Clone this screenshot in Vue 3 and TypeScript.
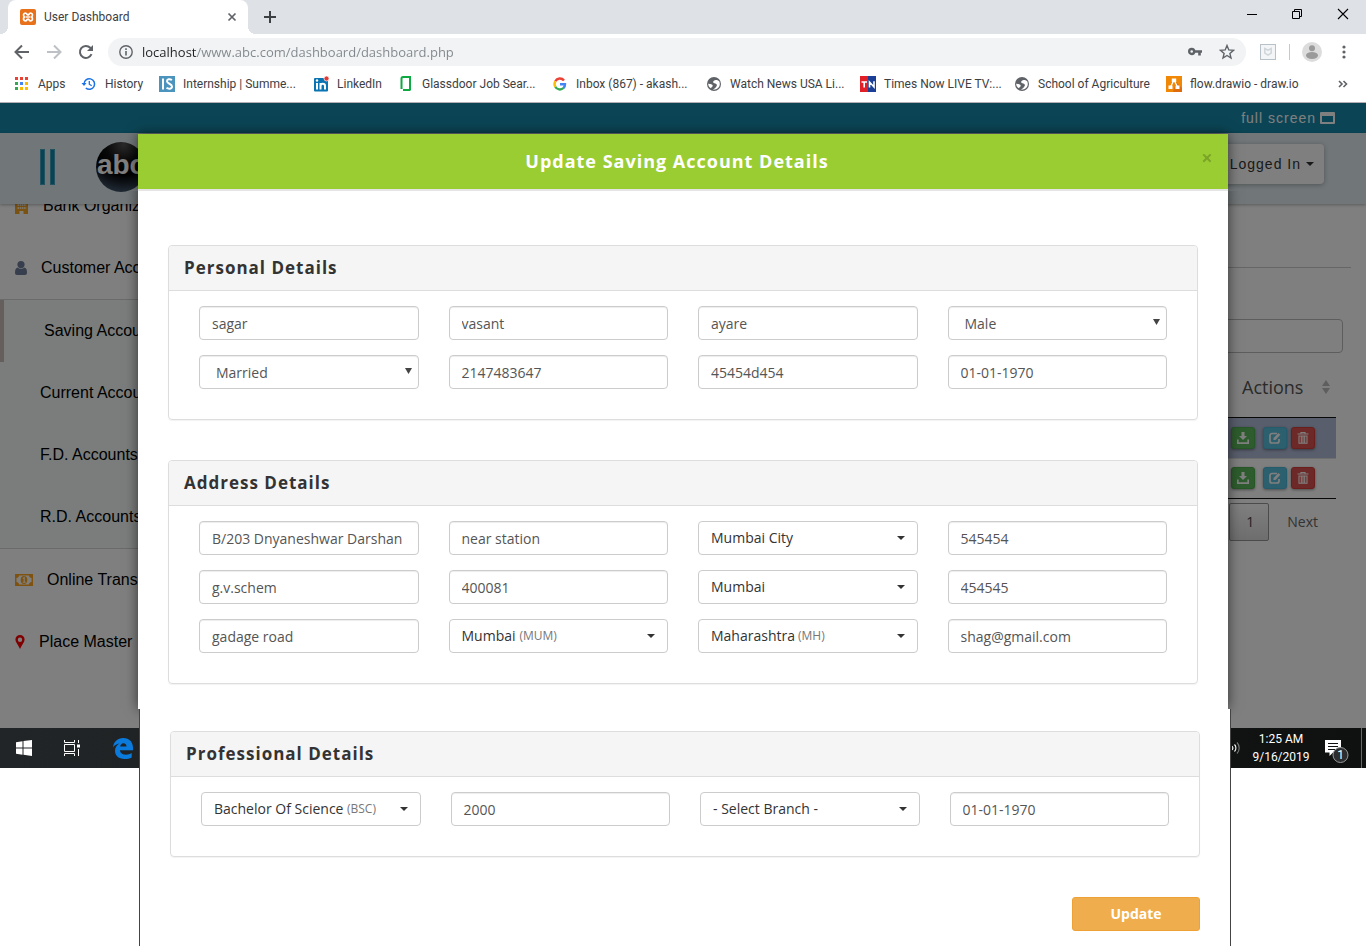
<script setup lang="ts">
import { ref } from 'vue'

type FieldKind = 'text' | 'native' | 'picker'
interface Field { label: string; kind: FieldKind; value: string; sub?: string }
interface Panel { title: string; fields: Field[] }
interface Bookmark { label: string; icon: string }

const url = ref('localhost/www.abc.com/dashboard/dashboard.php')

const bookmarks: Bookmark[] = [
  { label: 'Apps', icon: 'apps' },
  { label: 'History', icon: 'history' },
  { label: 'Internship | Summe...', icon: 'internshala' },
  { label: 'LinkedIn', icon: 'linkedin' },
  { label: 'Glassdoor Job Sear...', icon: 'glassdoor' },
  { label: 'Inbox (867) - akash...', icon: 'google' },
  { label: 'Watch News USA Li...', icon: 'globe' },
  { label: 'Times Now LIVE TV:...', icon: 'timesnow' },
  { label: 'School of Agriculture', icon: 'globe' },
  { label: 'flow.drawio - draw.io', icon: 'drawio' }
]

const appColors = ['#ea4335', '#ea4335', '#ea4335', '#34a853', '#4285f4', '#fbbc04', '#34a853', '#fbbc04', '#fbbc04']

const accountLinks = ['Saving Accounts', 'Current Accounts', 'F.D. Accounts', 'R.D. Accounts']

const upperPanels = ref<Panel[]>([
  {
    title: 'Personal Details',
    fields: [
      { label: 'First name', kind: 'text', value: 'sagar' },
      { label: 'Middle name', kind: 'text', value: 'vasant' },
      { label: 'Last name', kind: 'text', value: 'ayare' },
      { label: 'Gender', kind: 'native', value: 'Male' },
      { label: 'Marital status', kind: 'native', value: 'Married' },
      { label: 'Aadhaar number', kind: 'text', value: '2147483647' },
      { label: 'PAN number', kind: 'text', value: '45454d454' },
      { label: 'Date of birth', kind: 'text', value: '01-01-1970' }
    ]
  },
  {
    title: 'Address Details',
    fields: [
      { label: 'Flat', kind: 'text', value: 'B/203 Dnyaneshwar Darshan' },
      { label: 'Landmark', kind: 'text', value: 'near station' },
      { label: 'District', kind: 'picker', value: 'Mumbai City' },
      { label: 'Phone', kind: 'text', value: '545454' },
      { label: 'Street', kind: 'text', value: 'g.v.schem' },
      { label: 'Pin code', kind: 'text', value: '400081' },
      { label: 'Taluka', kind: 'picker', value: 'Mumbai' },
      { label: 'Mobile', kind: 'text', value: '454545' },
      { label: 'Road', kind: 'text', value: 'gadage road' },
      { label: 'City', kind: 'picker', value: 'Mumbai', sub: '(MUM)' },
      { label: 'State', kind: 'picker', value: 'Maharashtra', sub: '(MH)' },
      { label: 'Email', kind: 'text', value: 'shag@gmail.com' }
    ]
  }
])

const lowerPanels = ref<Panel[]>([
  {
    title: 'Professional Details',
    fields: [
      { label: 'Qualification', kind: 'picker', value: 'Bachelor Of Science', sub: '(BSC)' },
      { label: 'Income', kind: 'text', value: '2000' },
      { label: 'Branch', kind: 'picker', value: '- Select Branch -' },
      { label: 'Opening date', kind: 'text', value: '01-01-1970' }
    ]
  }
])

const sheets = [
  { name: 'upper', panels: upperPanels },
  { name: 'lower', panels: lowerPanels }
]
</script>

<template>
  <div class="screen">
    <header class="browser">
      <div class="tabstrip">
        <div class="tab">
          <svg class="i16" viewBox="0 0 16 16"><rect width="16" height="16" rx="2" fill="#e8711c" /><path d="M5.300 4a2.200 2.200 0 0 0-.8 4 2.200 2.200 0 0 0 .8 4C7 12 7 10 8 10s1 2 2.700 2a2.200 2.200 0 0 0 .8-4 2.200 2.200 0 0 0-.8-4C9 4 9 6 8 6S7 4 5.300 4z" fill="none" stroke="#fff" stroke-width="1.700" /><path d="M6 8h4" stroke="#fff" stroke-width="1.400" /></svg>
          <span class="tab-title">User Dashboard</span>
          <button class="bare" aria-label="Close tab"><svg width="10" height="10" viewBox="0 0 10 10"><path d="M1.500 1.500l7 7m0-7l-7 7" stroke="#5f6368" stroke-width="1.700" /></svg></button>
        </div>
        <button class="bare new-tab" aria-label="New tab"><svg width="12" height="12" viewBox="0 0 12 12"><path d="M6 0v12M0 6h12" stroke="#3c4043" stroke-width="2" /></svg></button>
        <div class="window-controls">
          <button class="bare" aria-label="Minimize"><svg width="10" height="12" viewBox="0 0 10 12"><path d="M0 6.500h10" stroke="#000" /></svg></button>
          <button class="bare" aria-label="Restore"><svg width="10" height="12" viewBox="0 0 10 12"><path d="M.5 3.500h7v7h-7zM2.500 3V1.500h7v7H8" fill="none" stroke="#000" /></svg></button>
          <button class="bare" aria-label="Close window"><svg width="12" height="12" viewBox="0 0 12 12"><path d="M1 1l10 10M11 1L1 11" stroke="#000" stroke-width="1.100" /></svg></button>
        </div>
      </div>

      <div class="toolbar">
        <button class="bare" aria-label="Back"><svg class="i16" viewBox="0 0 16 16"><path d="M15 8H2M8 1.500L1.500 8 8 14.500" fill="none" stroke="#5f6368" stroke-width="2" /></svg></button>
        <button class="bare" aria-label="Forward"><svg class="i16" viewBox="0 0 16 16"><path d="M1 8h13M8 1.500L14.500 8 8 14.500" fill="none" stroke="#bdc1c6" stroke-width="2" /></svg></button>
        <button class="bare" aria-label="Reload"><svg class="i16" viewBox="0 0 16 16"><path d="M13.500 10.200A6 6 0 1 1 12.300 3.800L14 5.500" fill="none" stroke="#5f6368" stroke-width="2" /><path d="M15 1v6H9z" fill="#5f6368" /></svg></button>
        <div class="omnibox">
          <svg class="i14" viewBox="0 0 14 14"><circle cx="7" cy="7" r="6.200" fill="none" stroke="#5f6368" stroke-width="1.400" /><path d="M7 6v4.500M7 3.300v1.600" stroke="#5f6368" stroke-width="1.600" /></svg>
          <input v-model="url" class="url" aria-label="Address" />
          <svg class="i14" viewBox="0 0 14 14"><circle cx="3.700" cy="6.500" r="2.500" fill="none" stroke="#5f6368" stroke-width="2.400" /><path d="M6 6.500h8M11.500 7v3.500" stroke="#5f6368" stroke-width="2.600" /></svg>
          <svg class="i16 star" viewBox="0 0 16 16"><path d="M8 1.500l1.800 4.400 4.700.4-3.600 3.100 1.100 4.600-4-2.500L4 14l1.100-4.600-3.600-3.100 4.700-.4z" fill="none" stroke="#5f6368" stroke-width="1.400" /></svg>
        </div>
        <svg class="i16 ext" viewBox="0 0 16 16"><rect x=".5" y=".5" width="15" height="15" fill="#f3f5f6" stroke="#b9c1c8" /><path d="M4.800 4.500v4.700L8 11.200l3.200-2V4.500L8 6.200z" fill="none" stroke="#cfd5da" stroke-width="1.500" /></svg>
        <span class="sep"></span>
        <svg class="avatar" viewBox="0 0 20 20"><circle cx="10" cy="10" r="10" fill="#dcdcdc" /><circle cx="10" cy="6.200" r="3" fill="#9a9a9a" /><ellipse cx="10" cy="13.500" rx="6" ry="3.400" fill="#9a9a9a" /></svg>
        <button class="bare dots" aria-label="Menu"><svg width="4" height="14" viewBox="0 0 4 14"><g fill="#5f6368"><circle cx="2" cy="2" r="1.600" /><circle cx="2" cy="7" r="1.600" /><circle cx="2" cy="12" r="1.600" /></g></svg></button>
      </div>

      <nav class="bookmarks" aria-label="Bookmarks">
        <a v-for="b in bookmarks" :key="b.label" href="#">
          <svg class="i16" viewBox="0 0 16 16">
            <template v-if="b.icon === 'apps'">
              <rect v-for="(c, i) in appColors" :key="i" :x="1 + (i % 3) * 5" :y="1 + Math.floor(i / 3) * 5" width="3" height="3" :fill="c" />
            </template>
            <template v-else-if="b.icon === 'history'">
              <path d="M3 8a5.300 5.300 0 1 1 1.800 4" fill="none" stroke="#1a73e8" stroke-width="1.500" /><path d="M.5 7h5L3 10z" fill="#1a73e8" /><path d="M8.300 5v3.200l2.400 1.500" fill="none" stroke="#1a73e8" stroke-width="1.300" />
            </template>
            <template v-else-if="b.icon === 'internshala'">
              <rect width="16" height="16" fill="#4a94be" /><path d="M4 2.500v11M13 4c-2.500-1.500-5-.8-5 1.200C8 8 13 7.500 13 10.500c0 2.500-3.500 2.800-5.500 1.300" fill="none" stroke="#fff" stroke-width="2" />
            </template>
            <template v-else-if="b.icon === 'linkedin'">
              <rect x="1" y="2" width="14" height="13.500" rx="1" fill="#0a73b1" /><path d="M4 7v6.500M7.500 7v6.500M7.500 10c0-3 4.500-3 4.500 0v3.500" fill="none" stroke="#fff" stroke-width="2" /><circle cx="4" cy="4.500" r="1.200" fill="#fff" /><circle cx="13.500" cy="2.500" r="2.500" fill="#e53935" stroke="#fff" stroke-width=".7" />
            </template>
            <template v-else-if="b.icon === 'glassdoor'">
              <path d="M3.500 13V2.500a1.500 1.500 0 0 1 1.500-1.500h8" fill="none" stroke="#0caa41" stroke-width="2" /><path d="M12 1v13.500M12 14H5" fill="none" stroke="#0caa41" stroke-width="2" />
            </template>
            <template v-else-if="b.icon === 'google'">
              <g fill="none" stroke-width="2.400"><path d="M3.300 5.300A5.200 5.200 0 0 1 12 4.500" stroke="#ea4335" /><path d="M3.300 10.700a5.200 5.200 0 0 1 0-5.400" stroke="#fbbc05" /><path d="M11.500 12a5.200 5.200 0 0 1-8.200-1.300" stroke="#34a853" /><path d="M8 8.200h5a5 5 0 0 1-1.600 3.900" stroke="#4285f4" /></g>
            </template>
            <template v-else-if="b.icon === 'globe'">
              <circle cx="8" cy="8" r="7" fill="#5f6368" /><path d="M13.200 5.200C12 4.500 11 3.500 9 4.200 6.500 5 6.800 6.800 8.500 7.200c2.300.5 3 1.500 2 3-.9 1.300-1.500 2.200-3.500 3.500 4 .2 6.800-2.300 6.800-5.700 0-1.100-.2-2-.6-2.800zM2.200 7.800C4 8 6.700 8.300 6.700 9.800c0 1.200-1.400 1-1.700 2.500-1.700-.9-2.800-2.500-2.800-4.500z" fill="#fff" />
            </template>
            <template v-else-if="b.icon === 'timesnow'">
              <rect width="8" height="16" fill="#e01f26" /><rect x="8" width="8" height="16" fill="#1b3f94" /><path d="M1.500 6h5.500M4.200 6v5.500M9.500 11.500V6l4.500 5V5.300" fill="none" stroke="#fff" stroke-width="1.600" />
            </template>
            <template v-else>
              <rect width="16" height="16" fill="#f08705" /><path d="M10 6l6 6v4H7z" fill="#df6c0c" /><path d="M8 4L4.500 11M8 4l3.500 7" stroke="#fff" stroke-width="1.300" /><path d="M5.800 2.500h4.400V6H5.800zM2.500 9.500h4V13h-4zM9.500 9.500h4V13h-4z" fill="#fff" />
            </template>
          </svg>
          <span>{{ b.label }}</span>
        </a>
        <button class="bare more" aria-label="More bookmarks"><svg width="10" height="8" viewBox="0 0 10 8"><path d="M1 1l3 3-3 3M5.500 1l3 3-3 3" fill="none" stroke="#5f6368" stroke-width="1.600" /></svg></button>
      </nav>
    </header>

    <div class="page">
      <div class="topbar">
        <a href="#">full screen</a>
        <svg width="15" height="12" viewBox="0 0 15 12"><path d="M0 1a1 1 0 0 1 1-1h13a1 1 0 0 1 1 1v10a1 1 0 0 1-1 1H1a1 1 0 0 1-1-1zM2 4v6h11V4z" fill="#fff" fill-rule="evenodd" /></svg>
      </div>
      <div class="appbar">
        <button class="bare menu-toggle" aria-label="Toggle menu"><i></i><i></i></button>
        <svg class="logo" viewBox="0 0 50 50" role="img" aria-label="abc">
          <defs><radialGradient id="ball" cx=".55" cy=".05" r="1"><stop offset="0" stop-color="#555" /><stop offset=".35" stop-color="#111" /><stop offset=".6" stop-color="#000" /><stop offset="1" stop-color="#4a6078" /></radialGradient></defs>
          <circle cx="25" cy="25" r="25" fill="url(#ball)" />
          <text x="25" y="32" text-anchor="middle" class="logo-text">abc</text>
        </svg>
        <button class="login">Logged In <svg width="8" height="4" viewBox="0 0 8 4"><path d="M0 0h8L4 4z" fill="#333" /></svg></button>
      </div>
      <div class="workspace">
        <nav class="sidebar" aria-label="Main menu">
          <a href="#"><svg width="14" height="16" viewBox="0 0 14 16"><path d="M0 0h13v16H8.500v-3h-4v3H0z" fill="#f5a623" /><path d="M2.500 4h9M2.500 7h9M2.500 10h9" stroke="#fff" stroke-width="1.300" stroke-dasharray="1.500 .7" /></svg>Bank Organization</a>
          <a href="#"><svg width="12" height="14" viewBox="0 0 12 14"><circle cx="6" cy="3.600" r="3.600" fill="#6f7f9c" /><path d="M2.500 6.500c2 1.800 5 1.800 7 0C11.500 7 12 9 12 12c0 1.300-.8 2-2 2H2c-1.200 0-2-.7-2-2 0-3 .5-5 2.500-5.500z" fill="#6f7f9c" /></svg>Customer Accounts</a>
          <div class="submenu">
            <a v-for="(l, i) in accountLinks" :key="l" href="#" :class="{ active: i === 0 }">{{ l }}</a>
          </div>
          <a href="#"><svg width="18" height="12" viewBox="0 0 18 12"><path d="M0 0h18v12H0zM4 1.500C4 3 3 4 1.500 4v4C3 8 4 9 4 10.500h10C14 9 15 8 16.500 8V4C15 4 14 3 14 1.500z" fill="#ffa51e" fill-rule="evenodd" /><ellipse cx="9" cy="6" rx="3.300" ry="4" fill="#ffa51e" /><path d="M8 4.500l1.200-.9v4.200M7.700 8.200h3" fill="none" stroke="#fff" stroke-width="1.100" /></svg>Online Transactions</a>
          <a href="#"><svg width="10" height="14" viewBox="0 0 10 14"><path d="M5 0a4.600 4.600 0 0 1 4.600 4.600C9.600 7 7 10 5 14 3 10 .4 7 .4 4.600A4.600 4.600 0 0 1 5 0zm0 2.500a2.200 2.200 0 1 0 0 4.400 2.200 2.200 0 0 0 0-4.400z" fill="#f00" fill-rule="evenodd" /></svg>Place Master</a>
        </nav>
        <main class="main">
          <hr />
          <input class="search" aria-label="Search" />
          <table>
            <thead>
              <tr><td></td><th scope="col">Actions<svg width="10" height="14" viewBox="0 0 10 14"><path d="M1 6l4-6 4 6zM1 8l4 6 4-6z" fill="#bcbcbc" /></svg></th></tr>
            </thead>
            <tbody>
              <tr v-for="n in 2" :key="n">
                <td></td>
                <td class="actions"><div>
                  <button class="act save" aria-label="Download"><svg viewBox="0 0 12 12"><path d="M4.500 0h3v4H10L6 8 2 4h2.500z" fill="#fff" /><path d="M.8 7.500v3.700h10.400V7.500" fill="none" stroke="#fff" stroke-width="1.700" /></svg></button>
                  <button class="act edit" aria-label="Edit"><svg viewBox="0 0 12 12"><path d="M8 1.500H3A2 2 0 0 0 1 3.500V9a2 2 0 0 0 2 2h5a2 2 0 0 0 2-2V7" fill="none" stroke="#fff" stroke-width="1.700" /><path d="M4.500 8V6l5-5 1.800 1.800L6.500 8z" fill="#fff" /></svg></button>
                  <button class="act del" aria-label="Delete"><svg viewBox="0 0 12 12"><path d="M4 1.500V.5h4v1M0.500 2h11" fill="none" stroke="#fff" stroke-width="1.200" /><path d="M2 4v7.300h8V4zM4.300 4v7M6 4v7M7.700 4v7" fill="none" stroke="#fff" stroke-width="1.100" /></svg></button>
                </div></td>
              </tr>
            </tbody>
          </table>
          <div class="pager"><button class="current">1</button><button class="next">Next</button></div>
        </main>
      </div>
      <div class="backdrop"></div>
    </div>

    <footer class="taskbar">
      <button class="bare" aria-label="Start"><svg width="16" height="16" viewBox="0 0 16 16"><path d="M0 2.200L6.500 1.300v6.200H0zM7.500 1.100L16 0v7.500H7.500zM0 8.500h6.500v6.200L0 13.800zM7.500 8.500H16V16l-8.500-1.200z" fill="#fff" /></svg></button>
      <button class="bare" aria-label="Task view"><svg width="16" height="16" viewBox="0 0 16 16"><path d="M.5 4.500h10v7H.5zM.5 0v2.500h10V0M.5 16v-2.500h10V16M14.500 0v3M14.500 9v7" fill="none" stroke="#fff" /><rect x="13" y="4.500" width="3" height="3" fill="#fff" /></svg></button>
      <button class="bare edge" aria-label="Edge"><svg width="22" height="21" viewBox="-1 0 22 21"><path d="M0 9.300C.6 4 4.500 0 10.300 0 16.500 0 20 4.300 20 9.800v2.500H7c.2 3 2.700 4.400 5.800 4.400 2.200 0 4.200-.6 5.900-1.600v4.300c-2 1.100-4.500 1.600-7.200 1.600C5.800 21 2 17.800 2 12.800 2 9.500 3.800 6.800 6.500 5.400 4 5.700 1.500 7 0 9.300zM7.200 8.500h6.300c0-2-1-3.300-3-3.300-1.900 0-3 1.400-3.300 3.300z" fill="#0a7bdc" /></svg></button>
      <svg class="volume" width="10" height="14" viewBox="0 0 10 14"><path d="M0 5a3 3 0 0 1 0 4M2.500 3.500a5 5 0 0 1 0 7" fill="none" stroke="#fff" stroke-width="1.100" /><path d="M5 1.500a8 8 0 0 1 0 11" fill="none" stroke="#777" stroke-width="1.100" /></svg>
      <div class="clock"><span>1:25 AM</span><span>9/16/2019</span></div>
      <svg class="note" width="24" height="30" viewBox="0 -5 24 30"><path d="M0 2h16v12.500H8L4.500 18v-3.500H0z" fill="#fff" /><path d="M3 5.500h10M3 8.500h10M3 11.500h7" stroke="#111" /><circle cx="15.500" cy="17" r="7.500" fill="#2b2d2e" stroke="#999" /><text x="15.500" y="21" text-anchor="middle" class="badge">1</text></svg>
      <span class="peek"></span>
    </footer>

    <section class="modal" role="dialog" aria-labelledby="dialog-title">
      <header class="modal-head">
        <h4 id="dialog-title">Update Saving Account Details</h4>
        <button class="close" aria-label="Close">×</button>
      </header>
      <form @submit.prevent>
        <div v-for="s in sheets" :key="s.name" class="sheet" :class="s.name">
          <fieldset v-for="p in s.panels.value" :key="p.title" class="panel" :aria-label="p.title">
            <h5>{{ p.title }}</h5>
            <div class="fields">
              <template v-for="f in p.fields" :key="f.label">
                <input v-if="f.kind === 'text'" v-model="f.value" class="control" :aria-label="f.label" />
                <label v-else class="control choice" :class="f.kind">
                  <select :aria-label="f.label"><option>{{ f.value }}</option></select>
                  <small v-if="f.sub">{{ f.sub }}</small>
                  <svg v-if="f.kind === 'picker'" width="8" height="4" viewBox="0 0 8 4"><path d="M0 0h8L4 4z" fill="#333" /></svg>
                  <svg v-else class="tri" width="7" height="6" viewBox="0 0 7 6"><path d="M0 0h7L3.500 6z" fill="#444" /></svg>
                </label>
              </template>
            </div>
          </fieldset>
          <button v-if="s.name === 'lower'" type="submit" class="update">Update</button>
        </div>
      </form>
    </section>
  </div>
</template>

<style>
body {
  margin: 0;
  background: #fff;
}
</style>

<style scoped>
.screen {
  position: relative;
  min-height: 100vh;
  overflow: hidden;
  font-family: "Open Sans", "Noto Sans", sans-serif;
  font-size: 14px;
}
.screen *,
.screen *::before,
.screen *::after {
  box-sizing: border-box;
}
svg {
  display: block;
  flex: none;
}
a {
  text-decoration: none;
  color: inherit;
}
.bare {
  display: flex;
  align-items: center;
  justify-content: center;
  padding: 0;
  border: 0;
  background: none;
}
.i16 {
  width: 16px;
  height: 16px;
}
.i14 {
  width: 14px;
  height: 14px;
}

/* browser chrome */
.browser {
  font-family: Roboto, "Open Sans", sans-serif;
  font-size: 12px;
  color: #3c4043;
  border-bottom: 1px solid #b5afb5;
}
.tabstrip {
  display: flex;
  height: 34px;
  padding-left: 8px;
  background: #dee1e6;
}
.tab {
  position: relative;
  display: flex;
  align-items: center;
  gap: 8px;
  width: 240px;
  padding: 0 11px 0 12px;
  background: #fff;
  border-radius: 8px 8px 0 0;
}
.tab::before,
.tab::after {
  content: "";
  position: absolute;
  bottom: 0;
  width: 8px;
  height: 8px;
}
.tab::before {
  left: -8px;
  background: radial-gradient(circle at 0 0, #dee1e6 8px, #fff 8px);
}
.tab::after {
  right: -8px;
  background: radial-gradient(circle at 100% 0, #dee1e6 8px, #fff 8px);
}
.tab-title {
  flex: 1;
}
.new-tab {
  margin-left: 16px;
}
.window-controls {
  display: flex;
  align-items: center;
  gap: 35px;
  height: 28px;
  margin-left: auto;
  padding-right: 17px;
}
.toolbar {
  display: flex;
  align-items: center;
  gap: 16px;
  height: 36px;
  padding: 0 20px 0 14px;
}
.omnibox {
  flex: 1;
  display: flex;
  align-items: center;
  height: 28px;
  margin-left: -2px;
  padding: 0 11px;
  border-radius: 14px;
  background: #f1f3f4;
}
.url {
  flex: 1;
  min-width: 0;
  margin-left: 9px;
  padding: 0;
  border: 0;
  font: 13px "Open Sans", "Noto Sans", sans-serif;
  color: transparent;
  background: linear-gradient(90deg, #202124 55px, #80868b 55px);
  background-clip: text;
}
.star {
  margin-left: 17px;
}
.ext {
  margin-left: -2px;
}
.sep {
  width: 1px;
  height: 16px;
  margin: 0 -4px 0 -3px;
  background: #c6c9cc;
}
.avatar {
  width: 20px;
  height: 20px;
}
.dots {
  margin-left: 4px;
}
.bookmarks {
  display: grid;
  grid-template-columns: 67px 78px 154px 85px 154px 154px 154px 154px 152px 1fr auto;
  align-items: center;
  height: 32px;
  padding: 0 18px 4px 14px;
}
.bookmarks a {
  display: flex;
  align-items: center;
  gap: 8px;
  white-space: nowrap;
}

/* application page */
.page {
  position: relative;
  display: flex;
  flex-direction: column;
  height: 625px;
  overflow: hidden;
  font-family: "Liberation Sans", Arial, sans-serif;
  background: #fff;
}
.backdrop {
  position: absolute;
  inset: 0;
  background: rgba(0, 0, 0, 0.5);
}
.topbar {
  display: flex;
  align-items: center;
  justify-content: flex-end;
  gap: 4px;
  height: 30px;
  padding-right: 31px;
  letter-spacing: 1px;
  color: #fff;
  background: #168aaa;
}
.appbar {
  position: relative;
  display: flex;
  align-items: center;
  flex: none;
  height: 71px;
  padding: 0 42px 4px 40px;
  background: #e2edf1;
  box-shadow: 0 1px 3px rgba(0, 0, 0, 0.3);
}
.menu-toggle {
  gap: 5px;
}
.menu-toggle i {
  width: 5px;
  height: 36px;
  background: #0d86a8;
  border: 1px solid #45a5be;
}
.logo {
  width: 50px;
  height: 50px;
  margin-left: 41px;
}
.logo-text {
  font: bold 28px "Liberation Sans", Arial, sans-serif;
  fill: #fff;
}
.login {
  display: flex;
  align-items: center;
  gap: 5px;
  height: 40px;
  margin: 0 0 6px auto;
  padding: 0 10px 0 14px;
  border: 0;
  border-radius: 4px;
  background: #fff;
  box-shadow: 0 1px 5px rgba(0, 0, 0, 0.3);
  font: 14px "Liberation Sans", Arial, sans-serif;
  letter-spacing: 1px;
  color: #333;
}
.workspace {
  display: flex;
  flex: 1;
}
.sidebar {
  width: 230px;
  margin-top: -29px;
  font-size: 16px;
  color: #000;
}
.sidebar a {
  display: flex;
  align-items: center;
  gap: 14px;
  height: 62px;
  padding-left: 15px;
}
.submenu {
  border: solid #d4d4d4;
  border-width: 1px 0;
  background: #f4fbf8;
}
.sidebar .submenu a {
  padding-left: 40px;
}
.sidebar .submenu .active {
  border-left: 4px solid #c8bcbb;
}
.main {
  flex: 1;
  padding: 63px 15px 0 30px;
}
hr {
  margin: 0;
  border: 0;
  border-top: 1px solid #ccc;
}
.search {
  display: block;
  width: 240px;
  height: 34px;
  margin: 51px 8px 0 auto;
  border: 1px solid #bbb;
  border-radius: 4px;
  background: #fff;
}
table {
  width: calc(100% - 15px);
  margin-top: 4px;
  border-collapse: collapse;
  border-bottom: 1px solid #111;
  font-family: "Open Sans", "Noto Sans", sans-serif;
}
thead tr {
  height: 60px;
  border-bottom: 1px solid #111;
}
th {
  width: 124px;
  padding: 0 0 0 30px;
  font-size: 18px;
  font-weight: 400;
  text-align: left;
  color: #555;
}
th svg {
  display: inline-block;
  margin-left: 18px;
}
tbody tr {
  height: 40px;
}
tbody tr:first-child {
  height: 41px;
  background: #b2bcd8;
  border-bottom: 1px solid #ddd;
}
td {
  padding: 0;
}
.actions div {
  display: flex;
  gap: 4px;
  padding-left: 19px;
}
.act {
  display: flex;
  align-items: center;
  justify-content: center;
  width: 24px;
  height: 22px;
  padding: 0;
  border: 1px solid;
  border-radius: 3px;
  box-shadow: 0 1px 3px rgba(0, 0, 0, 0.4);
}
.act svg {
  width: 12px;
  height: 12px;
}
.save {
  margin-right: 4px;
  background: #5cb85c;
  border-color: #4cae4c;
}
.edit {
  background: #5bc0de;
  border-color: #46b8da;
}
.del {
  background: #d9534f;
  border-color: #d43f3a;
}
.pager {
  display: flex;
  justify-content: flex-end;
  align-items: center;
  margin-top: 4px;
  padding-right: 17px;
}
.pager button {
  height: 38px;
  padding: 0 16px;
  border: 0;
  background: none;
  font: 14px "Open Sans", "Noto Sans", sans-serif;
  color: #666;
}
.pager .current {
  width: 40px;
  margin-right: 2px;
  border: 1px solid #979797;
  border-radius: 2px;
  background: linear-gradient(#fff, #dcdcdc);
  color: #444;
}

/* desktop taskbar */
.taskbar {
  display: flex;
  align-items: center;
  height: 40px;
  padding: 0 4px 0 16px;
  background: linear-gradient(90deg, #222527, #0f1110);
  font-family: Roboto, "Open Sans", sans-serif;
  font-size: 12px;
  line-height: 18px;
  color: #fff;
}
.taskbar .bare {
  margin-right: 32px;
}
.volume {
  margin-left: auto;
}
.clock {
  display: flex;
  flex-direction: column;
  align-items: center;
  width: 78px;
}
.note {
  margin-left: 5px;
}
.badge {
  font: 12px Roboto, sans-serif;
  fill: #fff;
}
.peek {
  width: 1px;
  height: 40px;
  margin-left: 12px;
  background: #666;
}

/* dialog laid over the page */
.modal {
  position: absolute;
  top: 134px;
  left: 138px;
  right: 138px;
}
.modal-head {
  display: flex;
  height: 57px;
  padding: 0 15px;
  border-bottom: 2px solid #e5e5e5;
  background: #9acd32;
  box-shadow: 0 0 12px rgba(0, 0, 0, 0.6);
}
.modal-head h4 {
  flex: 1;
  margin: 0;
  font-size: 18px;
  line-height: 55px;
  letter-spacing: 1px;
  text-align: center;
  color: #fff;
}
.close {
  width: 12px;
  height: 46px;
  padding: 0;
  border: 0;
  background: none;
  font: bold 20px "Open Sans", sans-serif;
  color: #000;
  opacity: 0.2;
}
.sheet {
  display: flex;
  flex-direction: column;
  gap: 40px;
  background: #fff;
}
.upper {
  padding: 54px 30px 25px;
  box-shadow: 0 0 12px rgba(0, 0, 0, 0.6);
  clip-path: inset(0 -20px -19px);
}
.lower {
  position: relative;
  margin: 0 -3px 0 1px;
  padding: 22px 30px 15px;
  border: solid #444;
  border-width: 0 1px;
}
.panel {
  min-width: 0;
  margin: 0;
  padding: 0;
  border: 1px solid #ddd;
  border-radius: 4px;
  box-shadow: 0 1px 1px rgba(0, 0, 0, 0.05);
}
.panel h5 {
  margin: 0;
  padding: 0 15px;
  border-bottom: 1px solid #ddd;
  border-radius: 3px 3px 0 0;
  background: #f5f5f5;
  font-size: 17px;
  line-height: 44px;
  letter-spacing: 1px;
  color: #333;
}
.fields {
  display: grid;
  grid-template-columns: repeat(4, minmax(0, 1fr));
  gap: 15px 30px;
  padding: 15px 30px 30px;
}
.control {
  width: 100%;
  height: 34px;
  padding: 0 12px;
  border: 1px solid #ccc;
  border-radius: 4px;
  background: #fff;
  box-shadow: inset 0 1px 1px rgba(0, 0, 0, 0.075);
  font: 14px "Open Sans", "Noto Sans", sans-serif;
  color: #555;
}
.choice {
  display: flex;
  align-items: center;
}
.choice select {
  padding: 0;
  border: 0;
  background: none;
  appearance: none;
  font: inherit;
  color: inherit;
}
.choice small {
  margin-left: 3px;
  font-size: 12px;
  color: #777;
}
.choice svg {
  margin-left: auto;
}
.picker {
  padding-bottom: 2px;
  box-shadow: none;
  color: #333;
}
.picker svg {
  margin-top: 2px;
}
.native {
  padding: 0 6px 0 16px;
}
.native .tri {
  margin-bottom: 2px;
}
.update {
  align-self: flex-end;
  width: 128px;
  height: 34px;
  padding: 0 0 2px;
  border: 1px solid #eea236;
  border-radius: 3px;
  background: #f0ad4e;
  font: bold 14px "Open Sans", "Noto Sans", sans-serif;
  color: #fff;
}
</style>
